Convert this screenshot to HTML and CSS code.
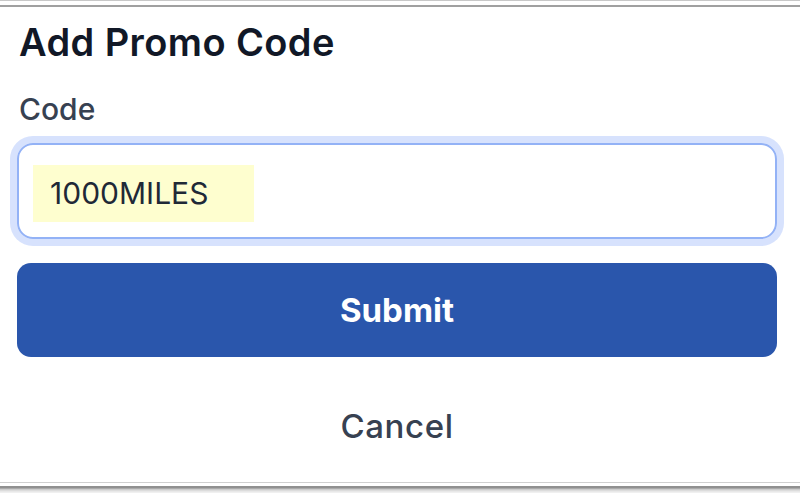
FILE: index.html
```html
<!DOCTYPE html>
<html>
<head>
<meta charset="utf-8">
<link rel="stylesheet" href="styles.css">
</head>
<body>
<div class="frame">
  <div class="dialog">
    <h1 class="title">Add Promo Code</h1>
    <label class="label">Code</label>
    <div class="field">
      <span class="value">1000MILES</span>
    </div>
    <button class="submit">Submit</button>
    <button class="cancel">Cancel</button>
  </div>
</div>
</body>
</html>
```
FILE: styles.css
```css
html, body {
  margin: 0;
  padding: 0;
  background: #ffffff;
}
body {
  width: 800px;
  height: 495px;
  overflow: hidden;
  font-family: Inter, "Noto Sans", sans-serif;
}
.frame {
  box-sizing: border-box;
  width: 800px;
  height: 495px;
  border-top: 1px solid #c8c8c8;
  position: relative;
  background: #fff;
}
.frame::before {
  content: "";
  position: absolute;
  left: 0; right: 0; top: 4px;
  height: 2px;
  background: #a0a0a0;
}
.frame::after {
  content: "";
  position: absolute;
  left: 0; right: 0; bottom: 2px;
  height: 11px;
  background: linear-gradient(#d0d0d0 0, #d0d0d0 1px, #fff 1px, #fff 4px, #909090 4px, #909090 6px, #c4c4c4 7px, #e4e4e4 9px, #f4f4f4 11px);
}
.dialog {
  display: flex;
  flex-direction: column;
  padding: 18px 23px 0 17px;
}
.title {
  margin: 0 0 0 2px;
  font-size: 38px;
  line-height: 46px;
  font-weight: 600;
  color: #111827;
  letter-spacing: 0.4px;
}
.label {
  margin: 27px 0 0 2px;
  font-size: 30px;
  line-height: 34px;
  font-weight: 500;
  color: #374151;
}
.field {
  margin-top: 17px;
  height: 96px;
  box-sizing: border-box;
  border: 2px solid #93b2f6;
  border-radius: 16px;
  box-shadow: 0 0 0 7px #d7e2fd;
  display: flex;
  align-items: center;
  padding-left: 14px;
}
.value {
  display: inline-block;
  background: #fefecf;
  padding: 0 46px 0 17px;
  height: 57px;
  line-height: 57px;
  font-size: 30px;
  color: #1f2937;
  font-weight: 400;
  margin-top: 4px;
}
.submit {
  margin-top: 24px;
  height: 94px;
  border: none;
  border-radius: 14px;
  background: #2a56ac;
  color: #ffffff;
  font-family: Inter, "Noto Sans", sans-serif;
  font-size: 33px;
  font-weight: 700;
  padding: 0;
}
.cancel {
  margin-top: 49px;
  align-self: center;
  background: none;
  border: none;
  padding: 0;
  font-family: Inter, "Noto Sans", sans-serif;
  font-size: 33px;
  line-height: 40px;
  font-weight: 500;
  color: #374151;
  letter-spacing: 0.6px;
}
```
